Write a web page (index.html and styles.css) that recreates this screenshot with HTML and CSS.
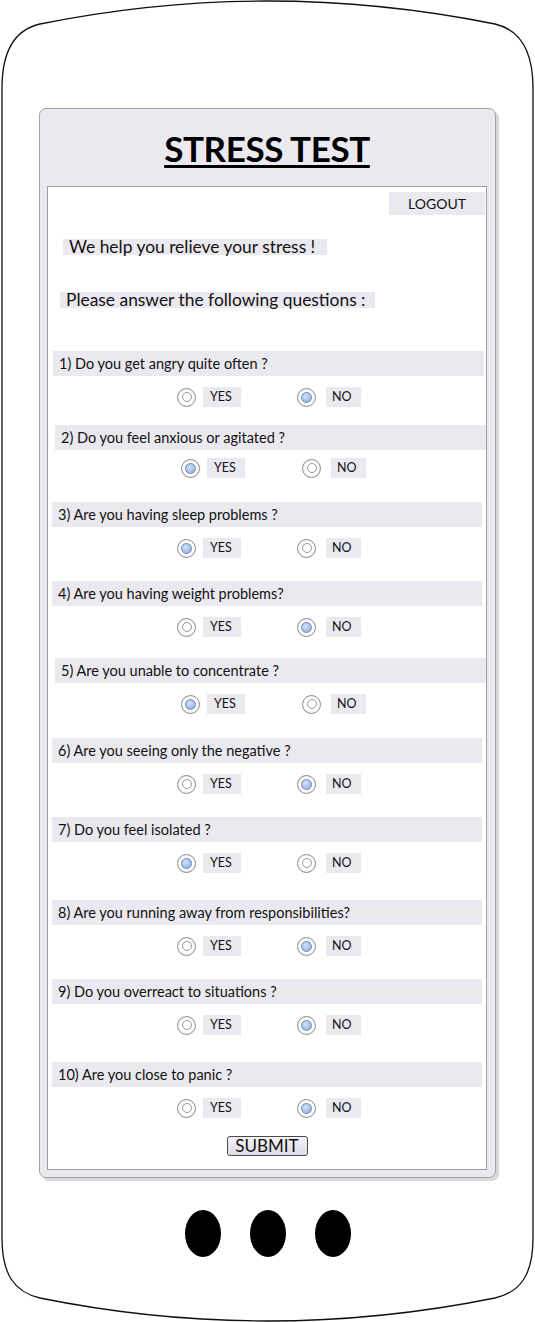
FILE: index.html
```html
<!DOCTYPE html>
<html lang="en">
<head>
<meta charset="utf-8">
<title>Stress Test</title>
<link rel="stylesheet" href="styles.css">
</head>
<body>
<div class="phone">
  <svg class="phone-frame" width="535" height="1322" viewBox="0 0 535 1322" aria-hidden="true">
    <path d="M2,88 C2,52 14,30 40,24 Q267,-22 495,24 C521,30 533,52 533,88 L533,1238 C533,1274 521,1292 495,1298 Q267,1344 40,1298 C14,1292 2,1274 2,1238 Z" fill="#fff" stroke="#111" stroke-width="1.3"/>
  </svg>

  <div class="panel">
    <h1 class="title">STRESS TEST</h1>
    <form class="screen">
      <div class="top-bar"><button type="button" class="logout">LOGOUT</button></div>
      <p class="note note-help">We help you relieve your stress !</p>
      <p class="note note-answer">Please answer the following questions :</p>

      <div class="questions">
        <div class="question q-a">
          <div class="q-bar">1) Do you get angry quite often ?</div>
          <div class="q-row"><input type="radio" name="q1"><span class="opt opt-yes">YES</span><input type="radio" name="q1" checked><span class="opt opt-no">NO</span></div>
        </div>
        <div class="question q-b">
          <div class="q-bar">2) Do you feel anxious or agitated ?</div>
          <div class="q-row"><input type="radio" name="q2" checked><span class="opt opt-yes">YES</span><input type="radio" name="q2"><span class="opt opt-no">NO</span></div>
        </div>
        <div class="question q-c">
          <div class="q-bar">3) Are you having sleep problems ?</div>
          <div class="q-row"><input type="radio" name="q3" checked><span class="opt opt-yes">YES</span><input type="radio" name="q3"><span class="opt opt-no">NO</span></div>
        </div>
        <div class="question q-c">
          <div class="q-bar">4) Are you having weight problems?</div>
          <div class="q-row"><input type="radio" name="q4"><span class="opt opt-yes">YES</span><input type="radio" name="q4" checked><span class="opt opt-no">NO</span></div>
        </div>
        <div class="question q-b">
          <div class="q-bar">5) Are you unable to concentrate ?</div>
          <div class="q-row"><input type="radio" name="q5" checked><span class="opt opt-yes">YES</span><input type="radio" name="q5"><span class="opt opt-no">NO</span></div>
        </div>
        <div class="question q-c">
          <div class="q-bar">6) Are you seeing only the negative ?</div>
          <div class="q-row"><input type="radio" name="q6"><span class="opt opt-yes">YES</span><input type="radio" name="q6" checked><span class="opt opt-no">NO</span></div>
        </div>
        <div class="question q-c">
          <div class="q-bar">7) Do you feel isolated ?</div>
          <div class="q-row"><input type="radio" name="q7" checked><span class="opt opt-yes">YES</span><input type="radio" name="q7"><span class="opt opt-no">NO</span></div>
        </div>
        <div class="question q-c">
          <div class="q-bar">8) Are you running away from responsibilities?</div>
          <div class="q-row"><input type="radio" name="q8"><span class="opt opt-yes">YES</span><input type="radio" name="q8" checked><span class="opt opt-no">NO</span></div>
        </div>
        <div class="question q-c">
          <div class="q-bar">9) Do you overreact to situations ?</div>
          <div class="q-row"><input type="radio" name="q9"><span class="opt opt-yes">YES</span><input type="radio" name="q9" checked><span class="opt opt-no">NO</span></div>
        </div>
        <div class="question q-c">
          <div class="q-bar">10) Are you close to panic ?</div>
          <div class="q-row"><input type="radio" name="q10"><span class="opt opt-yes">YES</span><input type="radio" name="q10" checked><span class="opt opt-no">NO</span></div>
        </div>
      </div>

      <div class="submit-row"><button type="submit" class="submit">SUBMIT</button></div>
    </form>
  </div>

  <div class="buttons">
    <span class="hw-btn"></span>
    <span class="hw-btn"></span>
    <span class="hw-btn"></span>
  </div>
</div>
</body>
</html>
```

FILE: styles.css
```css
* { box-sizing: border-box; }

html, body {
  margin: 0;
  padding: 0;
  background: #fff;
}

body {
  font-family: Lato, "Open Sans", "Liberation Sans", sans-serif;
  color: #111;
}

.phone {
  position: relative;
  width: 535px;
  height: 1322px;
  overflow: hidden;
}

.phone-frame {
  position: absolute;
  left: 0;
  top: 0;
  z-index: 0;
}

.panel {
  position: relative;
  z-index: 1;
  width: 457px;
  margin: 108px 0 0 39px;
  padding: 17px 8px 7px 7px;
  background: #ebe9f0;
  border: 1px solid #a4a4a4;
  border-radius: 7px;
  box-shadow: 3px 3px 0 #d8d8d8;
}

.title {
  margin: 0;
  font-size: 35px;
  line-height: 44px;
  font-weight: 700;
  letter-spacing: -0.4px;
  text-align: center;
  color: #000;
  text-decoration: underline;
  text-decoration-thickness: 3px;
  text-underline-offset: 3px;
}

.screen {
  margin: 16px 0 0 0;
  height: 984px;
  background: #fff;
  border: 1px solid #a0a0a0;
  display: flex;
  flex-direction: column;
}

.top-bar {
  display: flex;
  justify-content: flex-end;
  margin: 5px 1px 0 0;
}

.logout {
  width: 96px;
  height: 23px;
  padding: 0;
  border: none;
  background: #ebe9f0;
  font-family: inherit;
  font-size: 14px;
  color: #111;
  text-align: center;
}

.note {
  height: 16px;
  margin: 0;
  background: #ebe9f0;
  font-size: 17.4px;
  line-height: 16px;
  white-space: nowrap;
  color: #111;
}

.note-help {
  width: 264px;
  margin: 24px 0 0 15px;
  padding-left: 6px;
}

.note-answer {
  width: 315px;
  margin: 37px 0 0 12px;
  padding-left: 6px;
}

.questions {
  display: flex;
  flex-direction: column;
  margin-top: 43px;
}

.q-bar {
  height: 25px;
  padding-left: 6px;
  background: #ebe9f0;
  font-size: 14.5px;
  line-height: 25px;
  white-space: nowrap;
  color: #111;
}

.q-a .q-bar { margin: 0 2px 0 5px; }
.q-b .q-bar { margin: 0 0 0 7px; }
.q-c .q-bar { margin: 0 4px 0 4px; }

.q-row {
  display: flex;
  align-items: center;
  height: 20px;
  margin-top: 11px;
  padding-left: 129px;
}

.q-b .q-row { padding-left: 133px; }
.question:nth-child(2) .q-row { margin-top: 8px; }

.q-row input[type="radio"] {
  appearance: none;
  -webkit-appearance: none;
  width: 19px;
  height: 19px;
  margin: 0;
  border-radius: 50%;
  border: 1px solid #8c8c8c;
  background: radial-gradient(circle, #fff 50%, #e2e2e2 100%);
  display: flex;
  align-items: center;
  justify-content: center;
  flex: none;
}

.q-row input[type="radio"]::after {
  content: "";
  width: 10px;
  height: 10px;
  border-radius: 50%;
  border: 1px solid #979797;
  background: #fff;
  box-sizing: border-box;
}

.q-row input[type="radio"]:checked::after {
  width: 11px;
  height: 11px;
  border-color: #6a8bbd;
  background: radial-gradient(circle at 40% 35%, #d3e2f6 0%, #a8c2e8 55%, #88a8da 100%);
}

.opt {
  height: 20px;
  background: #ebe9f0;
  font-size: 12.5px;
  line-height: 20px;
  color: #111;
}

.opt-yes {
  width: 38px;
  margin: 0 56px 0 7px;
  padding-left: 7px;
}

.q-b .opt-yes { margin-right: 57px; }

.opt-no {
  width: 35px;
  margin-left: 10px;
  padding-left: 6px;
}

/* vertical rhythm between questions */
.question:nth-child(2) { margin-top: 18px; }
.question:nth-child(3) { margin-top: 24px; }
.question:nth-child(4) { margin-top: 23px; }
.question:nth-child(5) { margin-top: 21px; }
.question:nth-child(6) { margin-top: 24px; }
.question:nth-child(7) { margin-top: 23px; }
.question:nth-child(8) { margin-top: 27px; }
.question:nth-child(9) { margin-top: 23px; }
.question:nth-child(10) { margin-top: 27px; }

.submit-row {
  display: flex;
  justify-content: center;
  margin-top: 18px;
}

.submit {
  width: 81px;
  height: 20px;
  padding: 0;
  border: 1px solid #4a4a4a;
  border-radius: 3px;
  background: linear-gradient(#f6f4f9, #ddd8e7);
  font-family: inherit;
  font-size: 17px;
  line-height: 18px;
  color: #111;
}

.buttons {
  position: relative;
  z-index: 1;
  display: flex;
  justify-content: center;
  gap: 29px;
  margin-top: 32px;
  padding-left: 1px;
}

.hw-btn {
  width: 36px;
  height: 47px;
  border-radius: 50%;
  background: #000;
}
```
